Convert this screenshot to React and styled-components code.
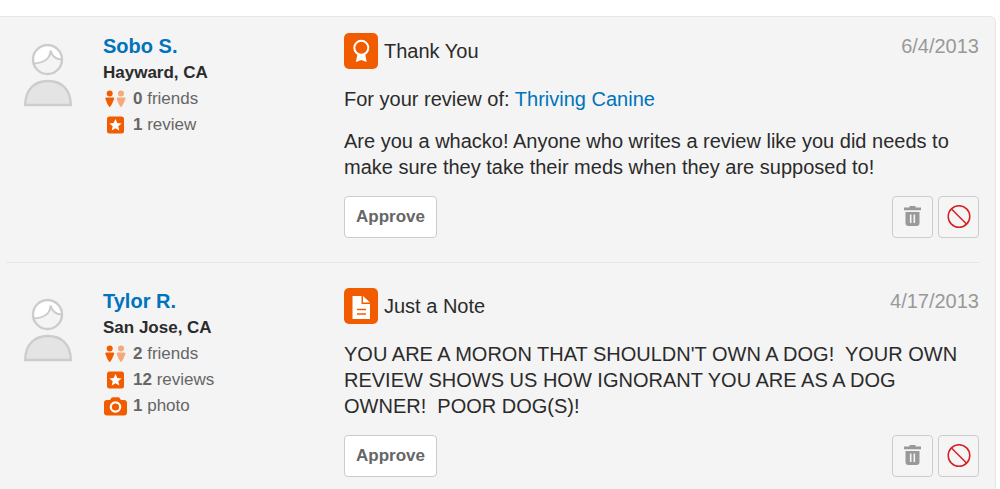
import React from "react";
import styled, { createGlobalStyle } from "styled-components";

const GlobalStyle = createGlobalStyle`
  * {
    box-sizing: border-box;
  }
  body {
    margin: 0;
    background-color: #fff;
    color: #2b2b2b;
    font-family: "Liberation Sans", Arial, sans-serif;
    font-size: 20px;
    line-height: 26px;
  }
`;

const Panel = styled.main`
  margin: 16px 4px 0 0;
  padding: 16px 16px 0 6px;
  background-color: #f4f4f4;
  border: 1px solid #e6e6e6;
  border-left: 0;
  border-radius: 0 6px 0 0;
`;

const List = styled.ul`
  list-style: none;
  margin: 0;
  padding: 0;
`;

const Item = styled.li`
  display: flex;
  align-items: flex-start;
  padding: 0 0 24px 18px;
  & + & {
    padding-top: 25px;
    border-top: 1px solid #e6e6e6;
  }
`;

const AvatarBox = styled.div`
  flex: 0 0 79px;
  padding-top: 10px;
  line-height: 0;
`;

const Passport = styled.div`
  flex: 0 0 241px;
`;

const UserLink = styled.a`
  display: block;
  margin-bottom: 1px;
  color: #0073bb;
  font-weight: bold;
  text-decoration: none;
`;

const City = styled.div`
  font-size: 17px;
  font-weight: bold;
`;

const Stats = styled.ul`
  list-style: none;
  margin: 0;
  padding: 0;
`;

const Stat = styled.li`
  display: flex;
  align-items: center;
  gap: 5px;
  color: #666;
  font-size: 17px;
  svg {
    flex: none;
  }
`;

const Content = styled.div`
  flex: 1;
  min-width: 0;
`;

const Header = styled.div`
  display: flex;
  align-items: center;
  gap: 6px;
  margin-bottom: 17px;
`;

const Badge = styled.span`
  display: flex;
  width: 34px;
  height: 36px;
  border-radius: 5px;
  background-color: #f15c00;
`;

const Title = styled.h2`
  flex: 1;
  margin: 0;
  font-size: 20px;
  font-weight: normal;
`;

const Posted = styled.time`
  align-self: flex-start;
  color: #999;
`;

const Text = styled.p`
  max-width: 620px;
  margin: 0 0 16px;
  white-space: pre-wrap;
`;

const BizLink = styled.a`
  color: #0073bb;
  text-decoration: none;
`;

const Actions = styled.div`
  display: flex;
  gap: 5px;
`;

const ApproveButton = styled.button`
  height: 42px;
  margin-right: auto;
  padding: 0 11px;
  border: 1px solid #ccc;
  border-radius: 4px;
  background-color: #fff;
  color: #666;
  font: bold 17px "Liberation Sans", Arial, sans-serif;
  cursor: pointer;
`;

const IconButton = styled.button`
  display: flex;
  align-items: center;
  justify-content: center;
  width: 41px;
  height: 42px;
  padding: 0;
  border: 1px solid #ccc;
  border-radius: 4px;
  background-color: #f5f5f5;
  cursor: pointer;
`;

const Avatar = () => (
  <svg width="49" height="64" viewBox="0 0 49 64" aria-hidden="true">
    <circle cx="23.5" cy="16.5" r="14.5" fill="#f4f4f4" />
    <path d="M9 20.500 A15 15 0 1 1 38 17.500 Q30 16 26.500 8.500 Q24 20 9 20.500Z" fill="#fff" />
    <path
      d="M9.500 20.500 C19 20 26.500 16 26.500 7.500 C28 13 32 16.500 38 16.500"
      fill="none"
      stroke="#ccc"
      strokeWidth="2"
    />
    <circle cx="23.500" cy="16.500" r="14.500" fill="none" stroke="#ccc" strokeWidth="2.400" />
    <path
      d="M1.200 62 C1.200 46 11 38 24 38 C37 38 46.800 46 46.800 62Z"
      fill="#e4e4e4"
      stroke="#ccc"
      strokeWidth="2.400"
    />
  </svg>
);

const FriendsIcon = () => (
  <svg width="25" height="18" viewBox="0 0 25 18" aria-hidden="true">
    <g fill="#f15c00">
      <circle cx="6.700" cy="3.500" r="3" />
      <path d="M3 7.500h7.500q.8 0 .6 1.500L9 14l-2 3h-.6l-2-3L2.400 9q-.2-1.500.6-1.500z" />
    </g>
    <g fill="#f5a87c">
      <circle cx="18" cy="3.500" r="3" />
      <path d="M14.300 7.500h7.500q.8 0 .6 1.500l-2.100 5-2 3h-.6l-2-3-2-5q-.2-1.500.6-1.500z" />
    </g>
  </svg>
);

const ReviewIcon = () => (
  <svg width="25" height="18" viewBox="0 0 25 18" aria-hidden="true">
    <rect x="4" y="0.500" width="17" height="17" rx="2.500" fill="#f15c00" />
    <path
      d="M12.500 3l1.800 4 4.300.4-3.300 2.900 1 4.300-3.800-2.300-3.800 2.300 1-4.300-3.300-2.900 4.300-.4z"
      fill="#fff"
    />
  </svg>
);

const PhotoIcon = () => (
  <svg width="25" height="19" viewBox="0 0 25 19" aria-hidden="true">
    <path
      d="M4 3h3l1.500-2.200Q9 .2 10 .2h5q1 0 1.500.6L18 3h3q3 0 3 3v9.500q0 3-3 3H4q-3 0-3-3V6q0-3 3-3z"
      fill="#f15c00"
    />
    <circle cx="12.500" cy="10" r="4.700" fill="none" stroke="#fff" strokeWidth="2.200" />
  </svg>
);

const AwardIcon = () => (
  <svg width="34" height="36" viewBox="0 0 34 36" aria-hidden="true">
    <circle cx="17.300" cy="14.800" r="7" fill="none" stroke="#fff" strokeWidth="2" />
    <path d="M13.500 20.800q3.800 2 7.600 0l1.600 8.200-5.400-2-5.400 2z" fill="#fff" />
  </svg>
);

const NoteIcon = () => (
  <svg width="34" height="36" viewBox="0 0 34 36" aria-hidden="true">
    <path d="M8.500 8h9v8h8.500v15H8.500z" fill="#fff" />
    <path d="M19 8l7 6.500h-7z" fill="#fff" />
    <path d="M13 21.500h9M13 26h9" stroke="#f15c00" strokeWidth="1.500" />
  </svg>
);

const TrashIcon = () => (
  <svg width="17" height="22" viewBox="0 0 17 22" aria-hidden="true">
    <path
      d="M5.500 0h6v1.500H17v2.800H0V1.500h5.500zM1.500 6h14v11q0 3-3 3h-8q-3 0-3-3z"
      fill="#999"
    />
    <path d="M6.700 8.500V17M10.300 8.500V17" stroke="#f5f5f5" strokeWidth="1.600" />
  </svg>
);

const BlockIcon = () => (
  <svg width="24" height="24" viewBox="0 0 24 24" aria-hidden="true">
    <circle cx="12" cy="11.500" r="10.800" fill="none" stroke="#d32323" strokeWidth="1.500" />
    <path d="M4.500 4l15 15" stroke="#d32323" strokeWidth="1.500" />
  </svg>
);

const compliments = [
  {
    name: "Sobo S.",
    city: "Hayward, CA",
    stats: [
      { icon: <FriendsIcon />, count: 0, label: "friends" },
      { icon: <ReviewIcon />, count: 1, label: "review" },
    ],
    badge: <AwardIcon />,
    title: "Thank You",
    biz: "Thriving Canine",
    date: "6/4/2013",
    text:
      "Are you a whacko! Anyone who writes a review like you did needs to make sure they take their meds when they are supposed to!",
  },
  {
    name: "Tylor R.",
    city: "San Jose, CA",
    stats: [
      { icon: <FriendsIcon />, count: 2, label: "friends" },
      { icon: <ReviewIcon />, count: 12, label: "reviews" },
      { icon: <PhotoIcon />, count: 1, label: "photo" },
    ],
    badge: <NoteIcon />,
    title: "Just a Note",
    date: "4/17/2013",
    text:
      "YOU ARE A MORON THAT SHOULDN'T OWN A DOG!  YOUR OWN REVIEW SHOWS US HOW IGNORANT YOU ARE AS A DOG OWNER!  POOR DOG(S)!",
  },
];

const Compliment = ({ item }) => (
  <Item>
    <AvatarBox>
      <Avatar />
    </AvatarBox>
    <Passport>
      <UserLink href="#">{item.name}</UserLink>
      <City>{item.city}</City>
      <Stats>
        {item.stats.map((stat) => (
          <Stat key={stat.label}>
            {stat.icon}
            <span>
              <b>{stat.count}</b> {stat.label}
            </span>
          </Stat>
        ))}
      </Stats>
    </Passport>
    <Content>
      <Header>
        <Badge>{item.badge}</Badge>
        <Title>{item.title}</Title>
        <Posted>{item.date}</Posted>
      </Header>
      {item.biz && (
        <Text>
          For your review of: <BizLink href="#">{item.biz}</BizLink>
        </Text>
      )}
      <Text>{item.text}</Text>
      <Actions>
        <ApproveButton type="button">Approve</ApproveButton>
        <IconButton type="button" aria-label="Delete">
          <TrashIcon />
        </IconButton>
        <IconButton type="button" aria-label="Block user">
          <BlockIcon />
        </IconButton>
      </Actions>
    </Content>
  </Item>
);

const App = () => (
  <>
    <GlobalStyle />
    <Panel>
      <List>
        {compliments.map((item) => (
          <Compliment key={item.name} item={item} />
        ))}
      </List>
    </Panel>
  </>
);

export default App;
